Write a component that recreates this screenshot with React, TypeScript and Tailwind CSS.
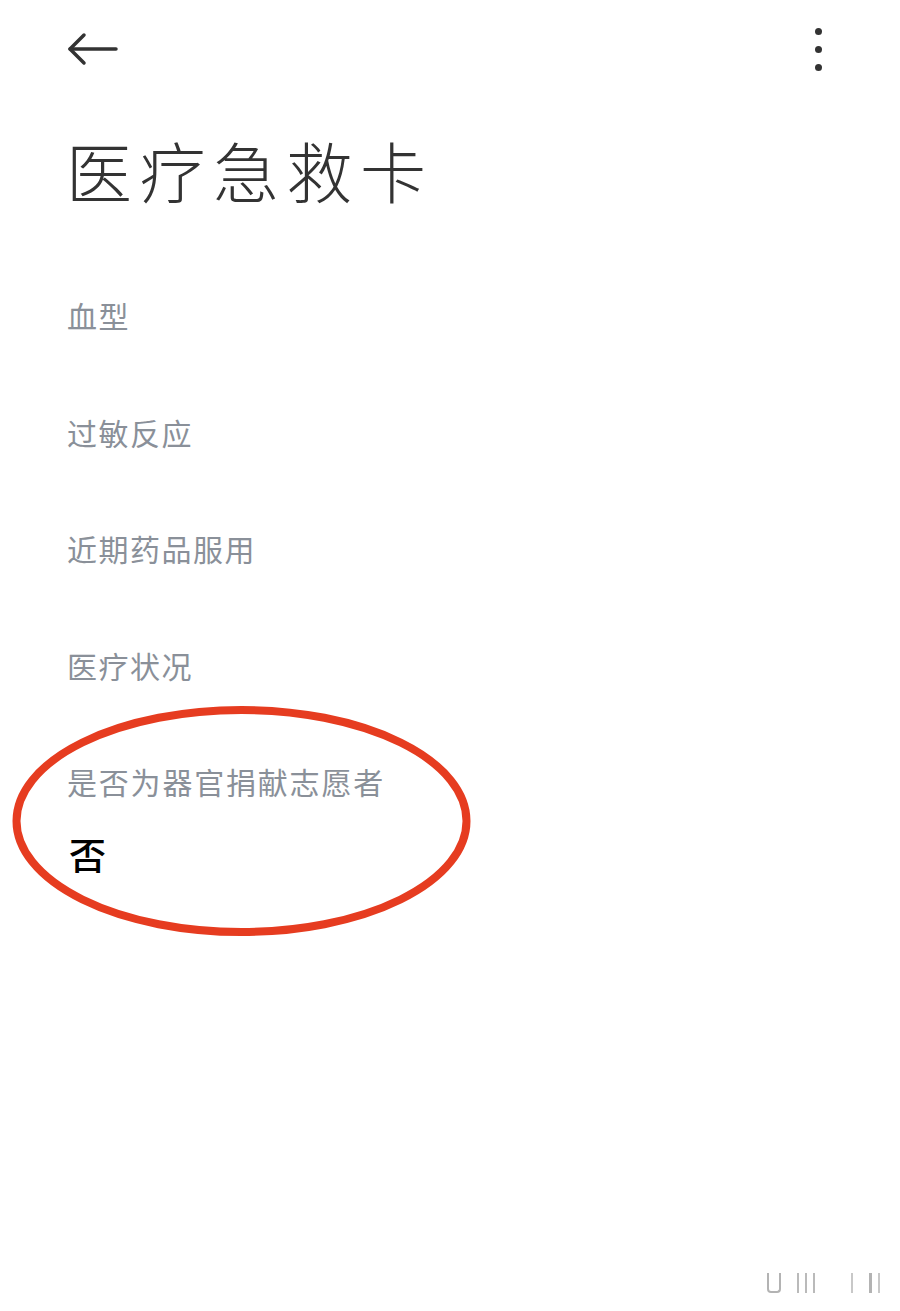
import React from "react";

const cjk = { fontFamily: '"Noto Sans CJK SC", "Noto Sans", sans-serif' };

export default function App() {
  const labels = ["血型", "过敏反应", "近期药品服用", "医疗状况"];
  return (
    <div className="relative w-[900px] h-[1311px] bg-white overflow-hidden" style={cjk}>
      <div className="flex items-center justify-between h-[98px] pl-[66px] pr-[78px]">
        <svg width="54" height="34" viewBox="0 0 54 34" fill="none" stroke="#333" strokeWidth="3.5" strokeLinecap="round" strokeLinejoin="round">
          <path d="M4 17 H50" />
          <path d="M18 3 L4 17 L18 31" />
        </svg>
        <div className="flex flex-col gap-[11px] items-center">
          <span className="w-[7px] h-[7px] rounded-full bg-[#333]" />
          <span className="w-[7px] h-[7px] rounded-full bg-[#333]" />
          <span className="w-[7px] h-[7px] rounded-full bg-[#333]" />
        </div>
      </div>
      <div className="pl-[66px] pt-[27px]">
        <h1 className="text-[66px] leading-[88px] font-light text-[#333] tracking-[7.5px]">医疗急救卡</h1>
      </div>
      <div className="pl-[67px] pt-[82px] flex flex-col">
        {labels.map((l) => (
          <div key={l} className="h-[116.5px] text-[30px] leading-[40px] text-[#8a9099] tracking-[1.5px]">
            {l}
          </div>
        ))}
        <div className="text-[30px] leading-[40px] text-[#8a9099] tracking-[1.8px]">是否为器官捐献志愿者</div>
        <div className="mt-[32px] pl-[2px] text-[37px] leading-[42px] font-medium text-black">否</div>
      </div>
      <svg className="absolute left-0 top-0 pointer-events-none" width="900" height="1311">
        <ellipse cx="241.5" cy="821" rx="225" ry="111" fill="none" stroke="#e63c20" strokeWidth="8" />
      </svg>
      <div className="absolute right-[20px] bottom-[18px] flex items-end gap-[6px] opacity-40">
        <span className="w-[14px] h-[20px] border-l-2 border-r-2 border-b-2 border-[#444] rounded-b-[4px]" />
        <span className="w-[2px] h-[20px] bg-[#555] ml-[10px]" />
        <span className="w-[2px] h-[20px] bg-[#555]" />
        <span className="w-[2px] h-[20px] bg-[#555]" />
        <span className="w-[2px] h-[20px] bg-[#777] ml-[30px]" />
        <span className="w-[3px] h-[20px] bg-[#444] ml-[10px]" />
        <span className="w-[2px] h-[20px] bg-[#777]" />
      </div>
    </div>
  );
}
